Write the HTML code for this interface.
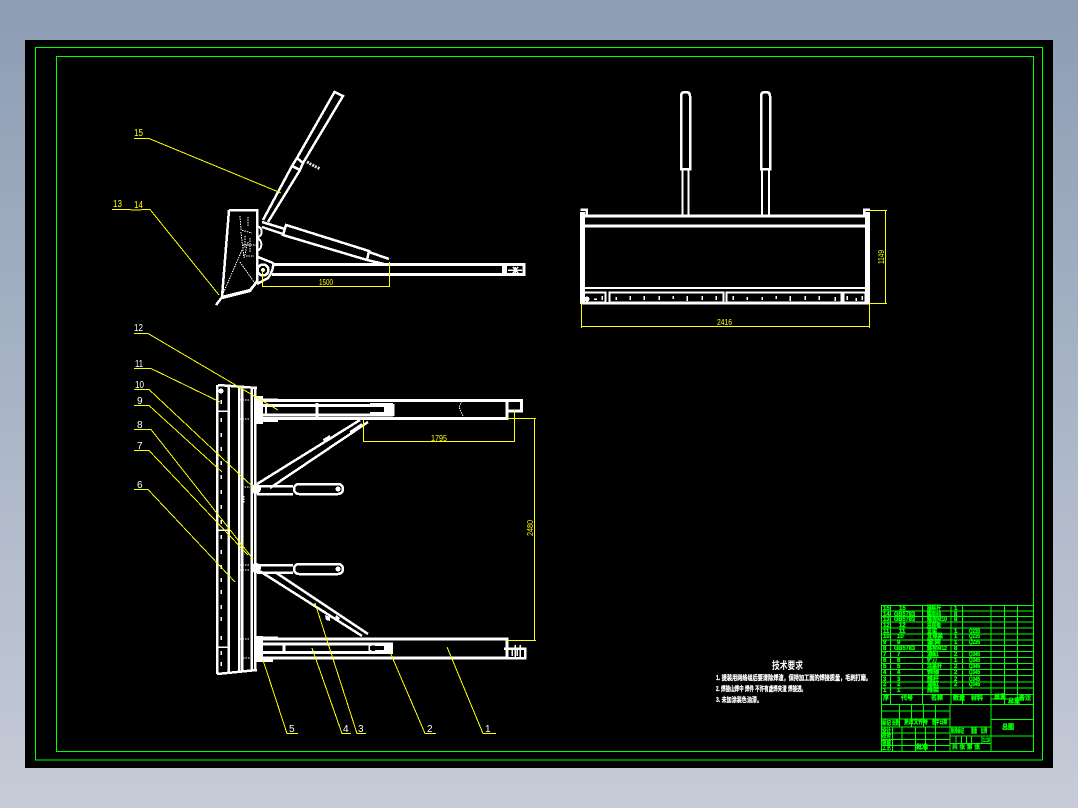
<!DOCTYPE html>
<html><head><meta charset="utf-8"><style>
html,body{margin:0;padding:0;width:1078px;height:808px;overflow:hidden;background:linear-gradient(180deg,#8c9db4 0%,#a9b5c6 50%,#c6cbd7 100%)}
svg{position:absolute;left:0;top:0;shape-rendering:crispEdges}
.w{stroke:#fff;fill:none;stroke-width:2.5}
.n{stroke:#fff;fill:none;stroke-width:1}
.y{stroke:#ff0;fill:none;stroke-width:1}
.g{stroke:#0f0;fill:none;stroke-width:1}
text{font-family:"Liberation Sans","Noto Sans CJK SC",sans-serif}
.l{font-size:10px;fill:#fff}
.ly{font-size:10px;fill:#ff0}
.d{font-size:8px;fill:#ff0}
.t{font-size:6px;fill:#0f0;stroke:#0f0;stroke-width:.35;font-weight:700;font-family:"Noto Sans CJK SC","Liberation Sans",sans-serif}
.r{font-size:7px;fill:#fff;stroke:#fff;stroke-width:.25;font-weight:700;font-family:"Liberation Sans","Noto Sans CJK SC",sans-serif}
</style></head><body>
<svg width="1078" height="808" viewBox="0 0 1078 808">
<rect x="25" y="40" width="1028" height="728" fill="#000"/>
<rect x="35.5" y="47.5" width="1007" height="712.5" class="g"/>
<rect x="56.5" y="56.5" width="977" height="695" class="g"/>

<!-- side view -->
<g class="w">
<path d="M297 158L334.500 92L343 96L303 163"/>
<path d="M297 158L303 163L300 170L292 166Z"/>
<path d="M292 166L263 220M300 170L268 222"/>
<path d="M229 210H257V282L250 290L222 297L229 210"/>
<path d="M222 297L216 305M222 298L250 291L257 281"/>
<path d="M262 222L285 229M262 227L283 234M286 225L369 251L367 260L283 235Z"/>
<path d="M369 252L389 259M367 260L384 264"/>
<path d="M258 257L273 263Q274 270 268 278L257 284"/>
<path d="M272 264.500H524V274.500H272" stroke-width="3"/>
<path d="M257 226A6 6 0 0 1 260 236L257 238M257 238A7 7 0 0 1 257 251" stroke-width="2"/>
</g>
<path d="M502 264h5v11h-5z" fill="#fff"/>
<path d="M508 270h14M513 267l5 6m0-6l-5 6M515 267v6" stroke="#fff" stroke-width="1.500" fill="none"/>
<circle cx="263" cy="270" r="5.500" stroke="#fff" stroke-width="2.500" fill="#000"/><circle cx="263" cy="270" r="2" fill="#fff"/>
<path d="M307 162L320 169" stroke="#ddd" stroke-width="3" stroke-dasharray="2 1"/>
<g stroke="#fff" stroke-width="1" fill="none" stroke-dasharray="1.500 1">
<path d="M240 216L241 230L252 233M248 217V226M241 232L244 258M244 258L248 242M242 250L222 296M240 262L254 282M243 245H256M246 256H254M245 236V248M250 238V252"/>
</g>
<g class="y">
<path d="M134 138.500H149L281 193"/>
<path d="M112 209.500H130L132 210L150 209.500L219 295"/>
<path d="M262.500 270V287M389.500 262V287M262 286.500H390"/>
</g>
<text x="134" y="136" class="ly" textLength="9" lengthAdjust="spacingAndGlyphs">15</text>
<text x="113" y="207" class="ly" textLength="9" lengthAdjust="spacingAndGlyphs">13</text>
<text x="134" y="208" class="ly" textLength="9" lengthAdjust="spacingAndGlyphs">14</text>
<text x="319" y="285" class="d" textLength="14" lengthAdjust="spacingAndGlyphs">1500</text>

<!-- plan view blade -->
<g class="w">
<path d="M218 385L257 388M217 674L257 670"/>
<path d="M217 385V674M228.500 386V672M239 387V671M242 387V671"/>
<path d="M251.500 388V670M255 388V670" stroke-width="2.500"/>
<path d="M217 411H229M217 530H229M217 647H229" stroke-width="1.500"/>
</g>
<circle cx="221" cy="391" r="2.500" fill="#fff"/>
<path d="M221 400v4M221 418v4M221 433v4M221 447v4M221 461v4M221 475v4M221 490v4M221 505v4M221 520v4M221 535v4M221 550v4M221 565v4M221 578v4M221 590v4M221 605v4M221 617v4M221 636v4M221 651v4M221 662v4" stroke="#fff" stroke-width="1.500"/>

<!-- top arm -->
<g class="w">
<path d="M255 400.500H507V418.500H257" stroke-width="3"/>
<path d="M505 400.500H521.500V411H507" stroke-width="3"/>
<path d="M262 405.500H393M262 415H393" stroke-width="3"/>
<path d="M393 404V416M317 403V417" stroke-width="3"/>
<path d="M257 484L360 420M270 488L368 422"/>
<path d="M257 400H278M257 420H278" stroke-width="3.500"/>
</g>
<path d="M370 403H393V415H370Z" fill="#fff"/>
<rect x="368" y="407" width="16" height="5" fill="#000"/>
<path d="M462 401L459 407L463 416" class="n" stroke-dasharray="1.500 1"/>
<path d="M256 396H263V424H256Z" fill="#fff"/>
<path d="M266 406V415" stroke="#fff" stroke-width="2"/>
<path d="M350 432L362 424" stroke="#fff" stroke-width="2"/>
<!-- bottom arm -->
<g class="w">
<path d="M255 639H507V658H257" stroke-width="3"/>
<path d="M504 648.500H525V658H504" stroke-width="2.500"/>
<path d="M262 644H393M262 652.500H393" stroke-width="3"/>
<path d="M284 643V653M370 643V653" stroke-width="3"/>
<path d="M258 570L362 636M275 572L368 634"/>
<path d="M257 638H278M257 660H273" stroke-width="3.500"/>
</g>
<path d="M375 643H393V653H375Z" fill="#fff"/><rect x="370" y="646" width="14" height="4" fill="#000"/>
<path d="M256 636H263V662H256Z" fill="#fff"/>
<path d="M512 650v6M517 650v6M520 645v12M515 645v12" stroke="#fff" stroke-width="1.500"/>
<!-- handles plan -->
<g class="w">
<path d="M257 486H293M257 494H293"/>
<rect x="294" y="484" width="49" height="10" rx="5"/>
<path d="M257 565H293M257 572.500H293"/>
<rect x="294" y="564" width="49" height="10" rx="5"/>
</g>
<circle cx="338" cy="489" r="2.500" fill="#fff"/><circle cx="338" cy="569" r="2.500" fill="#fff"/>
<circle cx="256" cy="489" r="5" fill="#fff"/><circle cx="256" cy="568" r="5" fill="#fff"/>
<path d="M323 439l7-4v5l-6 3zM325 615l5 2v4l-4-1zM336 615l4 3-2 3-3-2z" fill="#fff"/>
<g class="n" stroke-dasharray="1.500 1">
<path d="M240 400H250M240 419H250M242 487H250M244 496V503M240 565H250M240 570H250M240 639H250M243 658H250"/>
</g>
<!-- plan dims and leaders -->
<g class="y">
<path d="M134 333.500H148L278 410"/>
<path d="M134 368.500H151L220 402"/>
<path d="M134 389.500H149L253 487"/>
<path d="M134 405.500H149L222 472"/>
<path d="M134 429.500H151L253 559"/>
<path d="M134 450.500H149L248 555"/>
<path d="M134 489.500H148L235 582"/>
<path d="M298 733.500H287L263 660"/>
<path d="M351 733.500H342L312 648"/>
<path d="M366 733.500H357L315 603"/>
<path d="M436 733.500H425L390 652"/>
<path d="M496 733.500H483L447 647"/>
<path d="M363.500 420V442M363 441.500H515M514.500 410V442"/>
<path d="M507 418.500H536M507 640.500H536M534.500 418V641"/>
</g>
<g class="l">
<text x="134" y="331" textLength="9" lengthAdjust="spacingAndGlyphs">12</text>
<text x="135" y="367" textLength="8" lengthAdjust="spacingAndGlyphs">11</text>
<text x="135" y="388" textLength="9" lengthAdjust="spacingAndGlyphs">10</text>
<text x="137" y="404">9</text>
<text x="137" y="428">8</text>
<text x="137" y="449">7</text>
<text x="137" y="488">6</text>
<text x="289" y="732">5</text>
<text x="343" y="732">4</text>
<text x="358" y="732">3</text>
<text x="427" y="732">2</text>
<text x="485" y="732">1</text>
</g>
<text x="431" y="441" class="d" textLength="16" lengthAdjust="spacingAndGlyphs">1795</text>
<text transform="translate(533,536) rotate(-90)" class="d" textLength="16" lengthAdjust="spacingAndGlyphs">2480</text>

<!-- front view -->
<g class="w">
<path d="M681 169V96Q681 92 685.500 92Q690 92 690 96V169Z"/>
<path d="M761 169V96Q761 92 765.500 92Q770 92 770 96V169Z"/>
<path d="M682.500 170V215M688.500 170V215M762 170V215M769 170V215" stroke-width="2"/>
<path d="M584 216H866" stroke-width="3"/>
<path d="M584 226H866" stroke-width="3"/>
<path d="M584 288H866" stroke-width="2"/>
<path d="M582.500 212V304" stroke-width="5"/>
<path d="M867.500 212V304" stroke-width="5"/>
<path d="M580.500 209.500H586.500V216M864 216V209.500H870" stroke-width="2.500"/>
<path d="M581 303H869" stroke-width="2.500"/>
<rect x="583.500" y="292.500" width="22" height="10" stroke-width="2"/>
<rect x="609.500" y="292.500" width="114" height="10" stroke-width="2"/>
<rect x="726.500" y="292.500" width="115" height="10" stroke-width="2"/>
<rect x="843.500" y="292.500" width="22" height="10" stroke-width="2"/>
</g>
<circle cx="587" cy="299" r="2.500" fill="#fff"/>
<path d="M594 299h3M602 296v4M616 297v3M630 296v4M644 296v4M659 296v4M673 296v3M687 296v5M702 296v4M716 296v4M733 296v4M747 297v3M762 297v3M776 296v3M790 296v5M805 296v4M819 296v4M835 297v4M847 296v4M856 298v3M862 296v4" stroke="#fff" stroke-width="1.500"/>
<g class="y">
<path d="M581.500 302V328M869.500 303V328M581 326.500H870"/>
<path d="M870 210.500H887M870 303.500H887M885.500 210V304"/>
</g>
<text x="717" y="325" class="d" textLength="15" lengthAdjust="spacingAndGlyphs">2416</text>
<text transform="translate(884,264) rotate(-90)" class="d" textLength="14" lengthAdjust="spacingAndGlyphs">1149</text>

<!-- tech requirements -->
<text x="772" y="669" fill="#fff" font-size="10" font-weight="700" textLength="31" lengthAdjust="spacingAndGlyphs" style="font-family:'Liberation Sans','Noto Sans CJK SC',sans-serif">技术要求</text>
<text x="716" y="680" class="r" textLength="155" lengthAdjust="spacingAndGlyphs">1. 提装用网络组后要清除焊渣，保持加工面的焊接质量，毛刺打磨。</text>
<text x="716" y="691" class="r" textLength="90" lengthAdjust="spacingAndGlyphs">2. 焊接山焊中 焊件 不许有虚焊夹渣 焊接透。</text>
<text x="716" y="702" class="r" textLength="46" lengthAdjust="spacingAndGlyphs">3. 未加涂装色油漆。</text>

<!-- title block -->
<g class="g">
<path d="M881.500 605.500H1033.500M881.500 611H1033.500M881.500 616.500H1033.500M881.500 622H1033.500M881.500 628H1033.500M881.500 634H1033.500M881.500 640H1033.500M881.500 645.500H1033.500M881.500 651.500H1033.500M881.500 657.500H1033.500M881.500 663.500H1033.500M881.500 669.500H1033.500M881.500 675.500H1033.500M881.500 682H1033.500M881.500 688H1033.500M881.500 694.500H1033.500M881.500 704.500H1033.500M881.500 751.500H1033.500"/>
<path d="M881.500 605V751.500M890.500 605V704M922.500 605V704M951 605V704M950 704V751.500M962.500 605V704M991 605V751.500M1004.500 605V704M1017.500 605V704"/>
<path d="M881.500 711H949.500M881.500 719H949.500M881.500 727H949.500M881.500 733H949.500M881.500 739.500H949.500M881.500 745.500H949.500"/>
<path d="M899.500 704V727M911.500 704V727M923.500 704V727M935.500 704V727M892.500 727V751.500M902 727V751.500M915.500 727V751.500M925.500 727V751.500M935.500 727V751.500"/>
<path d="M950 727H991M950 736H991M950 743.500H991M956 736V743.500M961.500 736V743.500M966.500 736V743.500M971.500 736V743.500M982 736V743.500"/>
<path d="M991 719.500H1033.500M991 736H1033.500M991 699H1017"/>
</g>
<g class="t">
<text x="883" y="610">15</text><text x="899" y="610">15</text><text x="927" y="610" textLength="14" lengthAdjust="spacingAndGlyphs">操纵杆</text><text x="954" y="610">1</text>
<text x="883" y="616">14</text><text x="894" y="616" textLength="21" lengthAdjust="spacingAndGlyphs">GB5783</text><text x="927" y="616" textLength="14" lengthAdjust="spacingAndGlyphs">螺栓M8</text><text x="954" y="616">8</text>
<text x="883" y="621">13</text><text x="894" y="621" textLength="21" lengthAdjust="spacingAndGlyphs">GB5783</text><text x="927" y="621" textLength="20" lengthAdjust="spacingAndGlyphs">螺栓M10</text><text x="954" y="621">8</text>
<text x="883" y="627">12</text><text x="899" y="627">12</text><text x="927" y="627" textLength="14" lengthAdjust="spacingAndGlyphs">连接板</text>
<text x="883" y="633">11</text><text x="899" y="633">11</text><text x="927" y="633" textLength="10" lengthAdjust="spacingAndGlyphs">支架</text><text x="954" y="633">1</text><text x="969" y="633" textLength="11" lengthAdjust="spacingAndGlyphs">Q235</text>
<text x="883" y="638">10</text><text x="897" y="638">10</text><text x="927" y="638" textLength="16" lengthAdjust="spacingAndGlyphs">支撑梁</text><text x="954" y="638">1</text><text x="969" y="638" textLength="11" lengthAdjust="spacingAndGlyphs">Q235</text>
<text x="883" y="644">9</text><text x="897" y="644">9</text><text x="927" y="644" textLength="14" lengthAdjust="spacingAndGlyphs">套筒</text><text x="954" y="644">1</text><text x="969" y="644" textLength="11" lengthAdjust="spacingAndGlyphs">Q235</text>
<text x="883" y="650">8</text><text x="894" y="650" textLength="21" lengthAdjust="spacingAndGlyphs">GB5783</text><text x="927" y="650" textLength="20" lengthAdjust="spacingAndGlyphs">螺栓M12</text><text x="954" y="650">8</text>
<text x="883" y="656">7</text><text x="897" y="656">7</text><text x="927" y="656" textLength="12" lengthAdjust="spacingAndGlyphs">油缸</text><text x="954" y="656">2</text><text x="969" y="656" textLength="11" lengthAdjust="spacingAndGlyphs">Q345</text>
<text x="883" y="662">6</text><text x="897" y="662">6</text><text x="927" y="662" textLength="10" lengthAdjust="spacingAndGlyphs">铲刀</text><text x="954" y="662">1</text><text x="969" y="662" textLength="11" lengthAdjust="spacingAndGlyphs">Q345</text>
<text x="883" y="668">5</text><text x="897" y="668">5</text><text x="927" y="668" textLength="15" lengthAdjust="spacingAndGlyphs">活塞杆</text><text x="954" y="668">2</text><text x="969" y="668" textLength="11" lengthAdjust="spacingAndGlyphs">Q345</text>
<text x="883" y="674">4</text><text x="897" y="674">4</text><text x="927" y="674" textLength="12" lengthAdjust="spacingAndGlyphs">销轴</text><text x="954" y="674">2</text><text x="969" y="674" textLength="11" lengthAdjust="spacingAndGlyphs">Q345</text>
<text x="883" y="681">3</text><text x="897" y="681">3</text><text x="927" y="681" textLength="12" lengthAdjust="spacingAndGlyphs">推杆</text><text x="954" y="681">2</text><text x="969" y="681" textLength="11" lengthAdjust="spacingAndGlyphs">Q345</text>
<text x="883" y="686">2</text><text x="897" y="686">2</text><text x="927" y="686" textLength="12" lengthAdjust="spacingAndGlyphs">油缸</text><text x="954" y="686">2</text><text x="969" y="686" textLength="11" lengthAdjust="spacingAndGlyphs">Q345</text>
<text x="883" y="692">1</text><text x="897" y="692">1</text><text x="927" y="692" textLength="12" lengthAdjust="spacingAndGlyphs">推架</text>
<text x="883" y="700">序</text><text x="901" y="700">代号</text><text x="931" y="700">名称</text><text x="953" y="700">数量</text><text x="971" y="700">材料</text><text x="994" y="699">单重</text><text x="1008" y="703">总重</text><text x="1019" y="700">备注</text>
<text x="882" y="725" textLength="9" lengthAdjust="spacingAndGlyphs">标记</text><text x="892" y="725" textLength="7" lengthAdjust="spacingAndGlyphs">处数</text><text x="904" y="724" textLength="24" lengthAdjust="spacingAndGlyphs">更改文件号</text><text x="932" y="724" textLength="15" lengthAdjust="spacingAndGlyphs">签字日期</text>
<text x="882" y="733" textLength="9" lengthAdjust="spacingAndGlyphs">设计</text><text x="882" y="738" textLength="9" lengthAdjust="spacingAndGlyphs">校对</text><text x="882" y="745" textLength="9" lengthAdjust="spacingAndGlyphs">审核</text><text x="882" y="750" textLength="9" lengthAdjust="spacingAndGlyphs">工艺</text><text x="916" y="749">批准</text>
<text x="951" y="733" textLength="13" lengthAdjust="spacingAndGlyphs">阶段标记</text><text x="971" y="733" textLength="6" lengthAdjust="spacingAndGlyphs">重量</text><text x="981" y="733" textLength="6" lengthAdjust="spacingAndGlyphs">比例</text><text x="983" y="742" textLength="7" lengthAdjust="spacingAndGlyphs">1:10</text>
<text x="952" y="749" textLength="28" lengthAdjust="spacingAndGlyphs">共 张 第 张</text>
<text x="1002" y="729" font-size="7" textLength="12" lengthAdjust="spacingAndGlyphs">总图</text>
</g>
</svg>
</body></html>
